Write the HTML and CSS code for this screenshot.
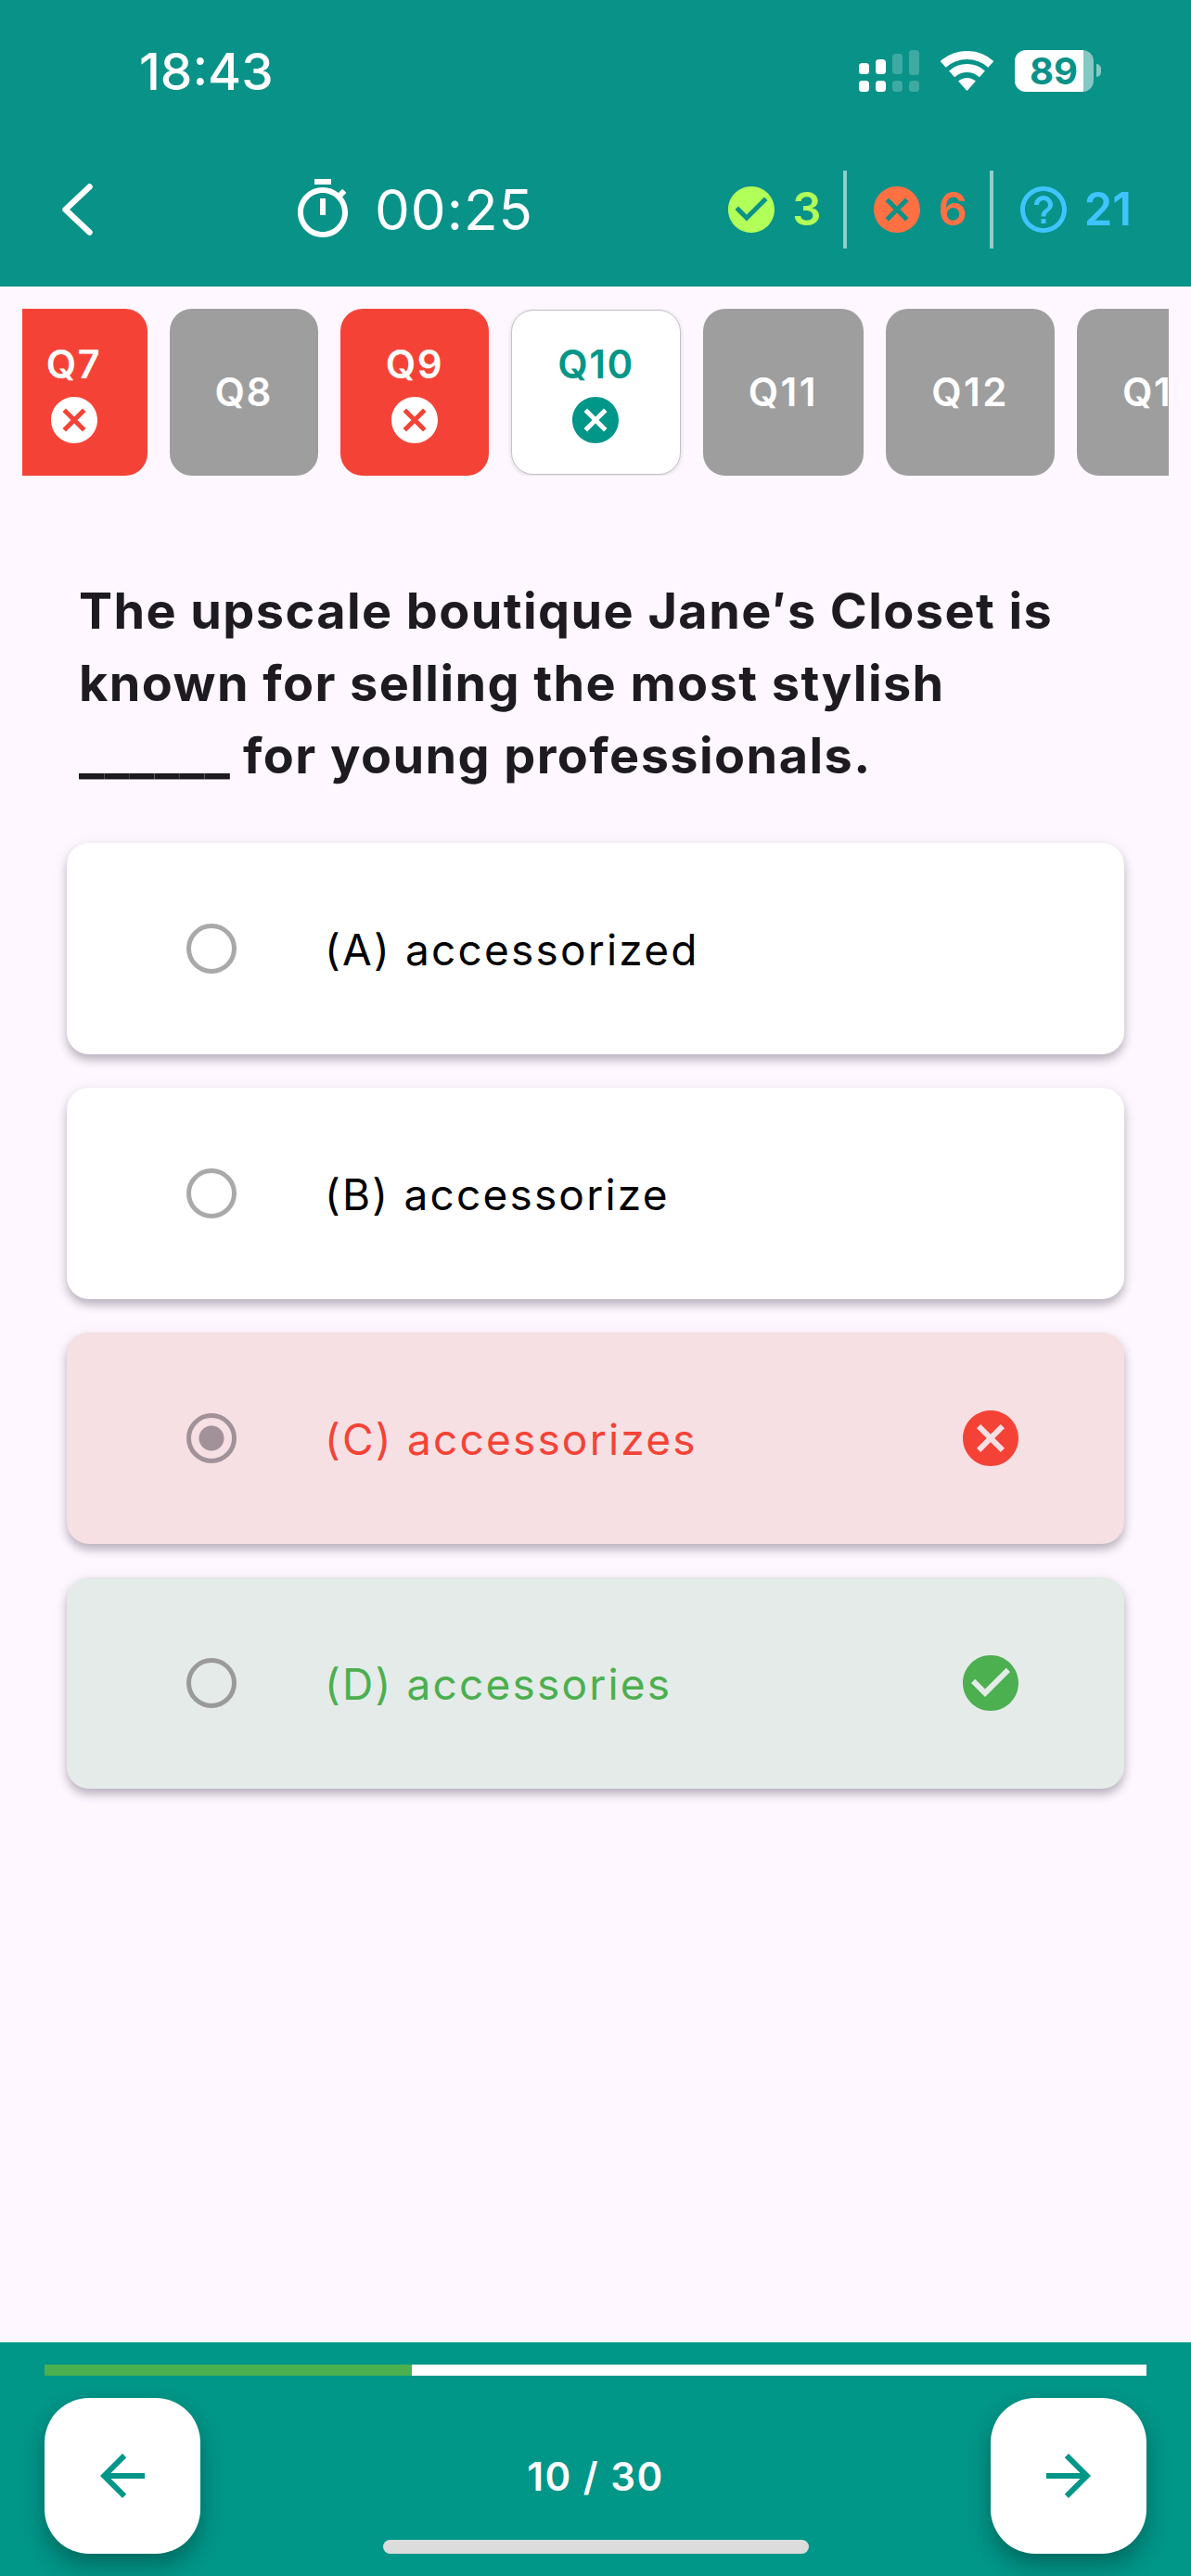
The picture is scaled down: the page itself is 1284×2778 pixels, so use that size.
FILE: index.html
```html
<!DOCTYPE html>
<html lang="en">
<head>
<meta charset="utf-8">
<title>Quiz</title>
<link rel="stylesheet" href="styles.css">
</head>
<body>
<svg class="defs" width="0" height="0" aria-hidden="true">
  <symbol id="i-cancel" viewBox="0 0 24 24"><path d="M12 2C6.47 2 2 6.47 2 12s4.47 10 10 10 10-4.47 10-10S17.53 2 12 2zm5 13.59L15.59 17 12 13.41 8.41 17 7 15.59 10.59 12 7 8.41 8.41 7 12 10.59 15.59 7 17 8.41 13.41 12 17 15.59z"/></symbol>
  <symbol id="i-check" viewBox="0 0 24 24"><path d="M12 2C6.48 2 2 6.48 2 12s4.48 10 10 10 10-4.48 10-10S17.52 2 12 2zm-2 15l-5-5 1.41-1.41L10 14.17l7.59-7.59L19 8l-9 9z"/></symbol>
  <symbol id="i-help" viewBox="0 0 24 24"><path d="M11 18h2v-2h-2v2zm1-16C6.48 2 2 6.48 2 12s4.48 10 10 10 10-4.48 10-10S17.52 2 12 2zm0 18c-4.41 0-8-3.59-8-8s3.59-8 8-8 8 3.59 8 8-3.59 8-8 8zm0-14c-2.21 0-4 1.79-4 4h2c0-1.1.9-2 2-2s2 .9 2 2c0 2-3 1.75-3 5h2c0-2.25 3-2.5 3-5 0-2.21-1.79-4-4-4z"/></symbol>
</svg>
<div class="screen">
  <header class="header">
    <div class="statusbar">
      <span class="clock">18:43</span>
      <div class="status-icons">
        <svg class="signal" width="65" height="45" viewBox="0 0 65 45" aria-hidden="true">
          <g fill="#fff">
            <rect x="0" y="14" width="11" height="12" rx="3.5"/><rect x="18" y="10" width="11" height="16" rx="3.5"/>
            <rect x="0" y="33" width="11" height="12" rx="3.5"/><rect x="18" y="33" width="11" height="12" rx="3.5"/>
          </g>
          <g fill="#fff" fill-opacity=".22">
            <rect x="36" y="4" width="11" height="22" rx="3.5"/><rect x="54" y="0" width="11" height="27" rx="3.5"/>
            <rect x="36" y="33" width="11" height="12" rx="3.5"/><rect x="54" y="33" width="11" height="12" rx="3.5"/>
          </g>
        </svg>
        <svg class="wifi" width="57" height="43" viewBox="0 0 57 43" aria-hidden="true">
          <path d="M2.7 14.4A38.5 38.5 0 0 1 54.3 14.4" fill="none" stroke="#fff" stroke-width="9"/>
          <path d="M12.1 24.8A24.5 24.5 0 0 1 44.9 24.8" fill="none" stroke="#fff" stroke-width="9"/>
          <path d="M28.5 43L19.1 32.6A14 14 0 0 1 37.9 32.6Z" fill="#fff"/>
        </svg>
        <div class="battery">
          <span class="battery-body">89</span>
          <span class="battery-nub"></span>
        </div>
      </div>
    </div>
    <nav class="nav">
      <svg class="back" width="33" height="56" viewBox="0 0 33 56" aria-hidden="true"><path d="M29.5 3.5L3.5 28l26 24.5" fill="none" stroke="#fff" stroke-width="6.5" stroke-linecap="round" stroke-linejoin="round"/></svg>
      <div class="timer">
        <svg width="72" height="72" viewBox="0 0 24 24" fill="#fff" aria-hidden="true"><path d="M15 1H9v2h6V1zm-4 13h2V8h-2v6zm8.03-6.61l1.42-1.42c-.43-.51-.9-.99-1.41-1.41l-1.42 1.42C16.07 4.74 14.12 4 12 4c-4.97 0-9 4.03-9 9s4.02 9 9 9 9-4.03 9-9c0-2.12-.74-4.07-1.97-5.61zM12 20c-3.87 0-7-3.13-7-7s3.13-7 7-7 7 3.13 7 7-3.13 7-7 7z"/></svg>
        <span class="timer-text">00:25</span>
      </div>
      <div class="stats">
        <div class="stat stat-right"><svg class="stat-icon"><use href="#i-check"/></svg><span>3</span></div>
        <span class="divider"></span>
        <div class="stat stat-wrong"><svg class="stat-icon"><use href="#i-cancel"/></svg><span>6</span></div>
        <span class="divider"></span>
        <div class="stat stat-left"><svg class="stat-icon"><use href="#i-help"/></svg><span>21</span></div>
      </div>
    </nav>
  </header>

  <main class="main">
    <div class="strip">
      <div class="track">
        <div class="tab tab-wrong tab-first"><span>Q7</span><svg class="tab-icon"><use href="#i-cancel"/></svg></div>
        <div class="tab tab-idle"><span>Q8</span></div>
        <div class="tab tab-wrong"><span>Q9</span><svg class="tab-icon"><use href="#i-cancel"/></svg></div>
        <div class="tab tab-current"><span>Q10</span><svg class="tab-icon"><use href="#i-cancel"/></svg></div>
        <div class="tab tab-idle tab-wide"><span>Q11</span></div>
        <div class="tab tab-idle tab-wide"><span>Q12</span></div>
        <div class="tab tab-idle"><span>Q13</span></div>
      </div>
    </div>

    <h1 class="question">The upscale boutique Jane′s Closet is known for selling the most stylish <span class="blank">______</span> for young professionals.</h1>

    <div class="options">
      <div class="option"><span class="radio"></span><span class="option-text">(A) accessorized</span></div>
      <div class="option"><span class="radio"></span><span class="option-text">(B) accessorize</span></div>
      <div class="option option-wrong"><span class="radio radio-on"></span><span class="option-text">(C) accessorizes</span><svg class="option-icon"><use href="#i-cancel"/></svg></div>
      <div class="option option-right"><span class="radio"></span><span class="option-text">(D) accessories</span><svg class="option-icon"><use href="#i-check"/></svg></div>
    </div>
  </main>

  <footer class="footer">
    <div class="progress"><div class="progress-fill"></div></div>
    <div class="pager">
      <button class="page-btn" type="button" aria-label="Previous"><svg width="72" height="72" viewBox="0 0 24 24" aria-hidden="true"><path d="M20 11H7.83l5.59-5.59L12 4l-8 8 8 8 1.41-1.41L7.83 13H20v-2z"/></svg></button>
      <span class="page-count">10 / 30</span>
      <button class="page-btn" type="button" aria-label="Next"><svg width="72" height="72" viewBox="0 0 24 24" aria-hidden="true"><path d="M12 4l-1.41 1.41L16.17 11H4v2h12.17l-5.58 5.59L12 20l8-8z"/></svg></button>
    </div>
    <div class="home-indicator"></div>
  </footer>
</div>
</body>
</html>
```

FILE: styles.css
```css
* { box-sizing: border-box; }
html, body { margin: 0; padding: 0; }
body { font-family: Inter, "Liberation Sans", sans-serif; background: #fef7ff; }
.defs { position: absolute; }

.screen {
  position: relative;
  width: 1284px;
  height: 2778px;
  display: flex;
  flex-direction: column;
  overflow: hidden;
  background: #fef7ff;
}

/* Header */
.header { height: 309px; background: #089288; color: #fff; flex: none; }
.statusbar {
  height: 152px;
  padding: 0 97px 0 150px;
  display: flex;
  align-items: center;
  justify-content: space-between;
}
.clock { font-size: 55px; font-weight: 500; line-height: 1; margin-top: 2px; }
.status-icons { display: flex; align-items: center; gap: 23px; }
.signal, .wifi { display: block; }
.battery { display: flex; align-items: center; gap: 3px; }
.battery-body {
  width: 85px;
  height: 45px;
  border-radius: 12px;
  background: linear-gradient(90deg, #fff 87%, rgba(255,255,255,.5) 87%);
  color: #089288;
  font-size: 40px;
  font-weight: 700;
  line-height: 45px;
  padding-left: 16px;
}
.battery-nub {
  width: 5px;
  height: 14px;
  border-radius: 0 7px 7px 0;
  background: rgba(255,255,255,.5);
}

.nav {
  height: 147px;
  padding: 0 64px 0 67px;
  display: flex;
  align-items: center;
}
.back { display: block; flex: none; }
.timer { display: flex; align-items: center; gap: 20px; margin-left: 212px; }
.timer svg { display: block; }
.timer-text { font-size: 60px; font-weight: 400; line-height: 1; letter-spacing: 1px; }

.stats { display: flex; align-items: center; gap: 24px; margin-left: auto; }
.stat { display: flex; align-items: center; gap: 14px; font-size: 49px; font-weight: 600; line-height: 1; }
.stat-icon { width: 60px; height: 60px; display: block; fill: currentColor; }
.stat-right { color: #b2ff59; }
.stat-wrong { color: #ff7043; }
.stat-left { color: #40c4ff; }
.divider { width: 4px; height: 84px; background: rgba(255,255,255,.55); }

/* Main */
.main { flex: 1; min-height: 0; }
.strip { margin: 24px 24px 0; overflow: hidden; height: 180px; }
.track { display: flex; gap: 24px; margin-left: -23.5px; width: max-content; height: 180px; }
.tab {
  height: 180px;
  padding: 0 49px;
  border-radius: 24px;
  display: flex;
  flex-direction: column;
  align-items: center;
  justify-content: center;
  gap: 6px;
  color: #fff;
  font-size: 42px;
  font-weight: 600;
  letter-spacing: 1.5px;
  line-height: 48px;
}
.tab-wide { letter-spacing: 2.5px; }
.tab-icon { width: 60px; height: 60px; display: block; fill: currentColor; margin-bottom: -6px; }
.tab-wrong { background: #f44336; }
.tab-idle { background: #9e9e9e; }
.tab-current {
  background: #fff;
  color: #009688;
  border: 1px solid #c6c2c8;
  box-shadow: 0 1px 5px rgba(0,0,0,.14);
  margin: 1px 0;
  height: 178px;
}

.question {
  margin: 107px 120px 55px 85px;
  font-size: 54px;
  font-weight: 700;
  line-height: 78px;
  color: #1d1b20;
  letter-spacing: 1.42px;
}
.blank { font-size: 57px; letter-spacing: 0; line-height: 1; }

.options { margin: 0 72px; display: flex; flex-direction: column; gap: 36px; }
.option {
  height: 228px;
  padding: 0 108px 0 129px;
  background: #fff;
  border-radius: 24px;
  display: flex;
  align-items: center;
  box-shadow: 0 6px 10px rgba(50,40,60,.3), 0 2px 20px rgba(0,0,0,.05);
  color: #000;
}
.radio {
  width: 54px;
  height: 54px;
  border-radius: 50%;
  border: 5.5px solid #a9a9a9;
  flex: none;
  margin-right: 95px;
}
.radio-on {
  border-color: #a09298;
  background: radial-gradient(circle, #a09298 0 13px, transparent 14px);
}
.option-text { font-size: 46px; line-height: 1; letter-spacing: 2.2px; font-weight: 400; margin-top: 2px; }
.option-icon { width: 72px; height: 72px; display: block; fill: currentColor; margin-left: auto; flex: none; }
.option-wrong { background: #f6e0e4; color: #f44336; }
.option-right { background: #e5ebe8; color: #4caf50; }
.option-right .radio { border-color: #9a9a9a; }

/* Footer */
.footer {
  position: relative;
  height: 252px;
  flex: none;
  background: #009688;
  padding: 24px 48px 0;
  color: #fff;
}
.progress { height: 12px; background: #fff; }
.progress-fill { height: 100%; width: 396px; background: #4caf50; }
.pager { margin-top: 24px; display: flex; align-items: center; justify-content: space-between; }
.page-btn {
  width: 168px;
  height: 168px;
  border: 0;
  padding: 0;
  border-radius: 48px;
  background: #fff;
  box-shadow: 0 12px 24px rgba(0,0,0,.3);
  display: flex;
  align-items: center;
  justify-content: center;
}
.page-btn svg { display: block; fill: #009688; }
.page-count { font-size: 42px; font-weight: 600; letter-spacing: 1.5px; }
.home-indicator {
  position: absolute;
  left: 413px;
  bottom: 24px;
  width: 459px;
  height: 15px;
  border-radius: 8px;
  background: #dcdcdc;
}
```
